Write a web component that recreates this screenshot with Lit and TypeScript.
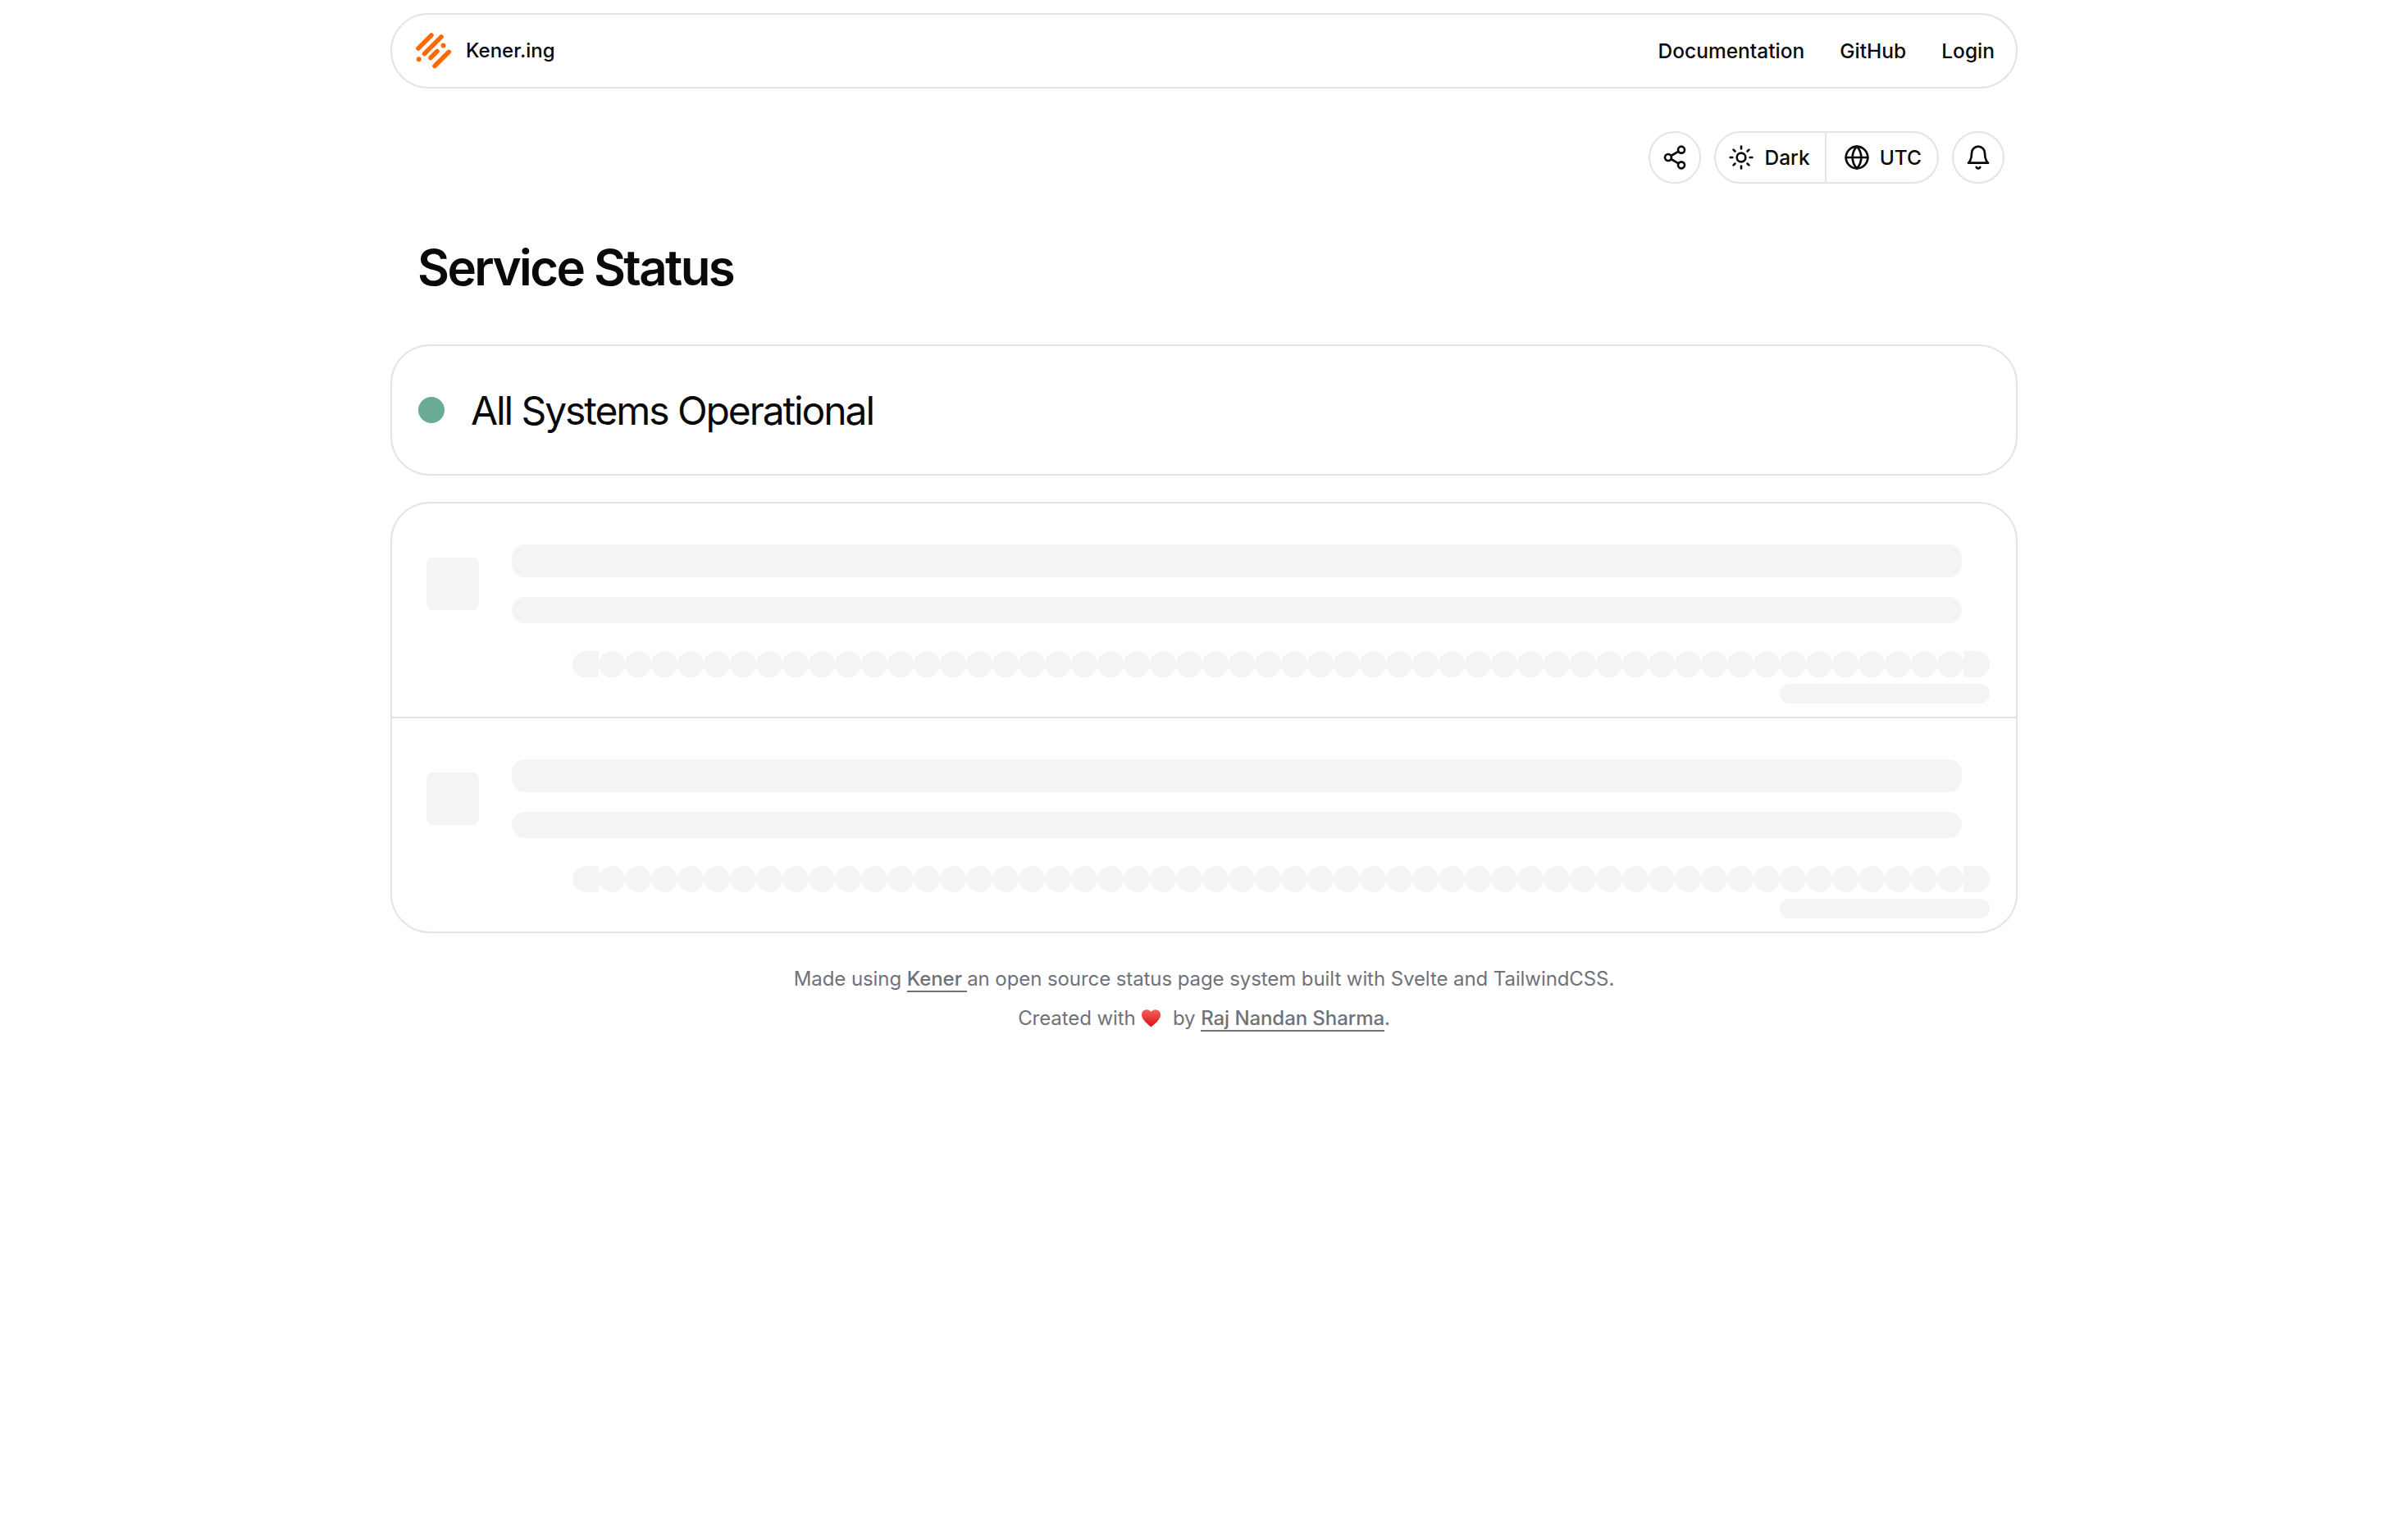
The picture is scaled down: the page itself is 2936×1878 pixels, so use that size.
import { LitElement, html, css, svg } from 'lit';
import { customElement } from 'lit/decorators.js';

const icon = (body: unknown) => html`<svg class="ico" viewBox="0 0 24 24" fill="none" stroke="currentColor" stroke-width="2" stroke-linecap="round" stroke-linejoin="round">${body}</svg>`;

const share = svg`<circle cx="18" cy="5" r="3"/><circle cx="6" cy="12" r="3"/><circle cx="18" cy="19" r="3"/><path d="m8.59 13.51 6.83 3.98"/><path d="m15.41 6.51-6.82 3.98"/>`;
const sun = svg`<circle cx="12" cy="12" r="4"/><path d="M12 2v2"/><path d="M12 20v2"/><path d="m4.93 4.93 1.41 1.41"/><path d="m17.66 17.66 1.41 1.41"/><path d="M2 12h2"/><path d="M20 12h2"/><path d="m6.34 17.66-1.41 1.41"/><path d="m19.07 4.93-1.41 1.41"/>`;
const globe = svg`<circle cx="12" cy="12" r="10"/><path d="M12 2a14.5 14.5 0 0 0 0 20 14.5 14.5 0 0 0 0-20"/><path d="M2 12h20"/>`;
const bell = svg`<path d="M6 8a6 6 0 0 1 12 0c0 7 3 9 3 9H3s3-2 3-9"/><path d="M10.3 21a1.94 1.94 0 0 0 3.4 0"/>`;

const DOTS = Array.from({ length: 54 });

@customElement('app-root')
export class AppRoot extends LitElement {
  static styles = css`
    :host {
      display: block;
      min-height: 1878px;
      background: #fff;
      color: #09090b;
      font-family: Inter, "Liberation Sans", sans-serif;
    }
    .page {
      width: 1984px;
      margin: 0 auto;
      padding-top: 16px;
      box-sizing: border-box;
    }
    .nav {
      height: 92px;
      box-sizing: border-box;
      border: 2px solid #e4e4e7;
      border-radius: 46px;
      display: flex;
      align-items: center;
      justify-content: space-between;
      padding: 0 26px 1px 29px;
      font-size: 24.5px;
      font-weight: 500;
    }
    .brand {
      display: flex;
      align-items: center;
      gap: 17px;
      font-size: 24px;
    }
    .logo {
      width: 44px;
      height: 44px;
      display: block;
    }
    .links {
      display: flex;
      gap: 43px;
    }
    .actions {
      display: flex;
      justify-content: flex-end;
      gap: 16px;
      margin-top: 52px;
      padding-right: 16px;
      font-size: 24.5px;
      font-weight: 500;
    }
    .round {
      width: 64px;
      height: 64px;
      box-sizing: border-box;
      border: 2px solid #e4e4e7;
      border-radius: 50%;
      display: flex;
      align-items: center;
      justify-content: center;
    }
    .ico {
      width: 32px;
      height: 32px;
      display: block;
      flex: none;
    }
    .group {
      height: 64px;
      box-sizing: border-box;
      border: 2px solid #e4e4e7;
      border-radius: 32px;
      display: flex;
    }
    .seg {
      display: flex;
      align-items: center;
      gap: 12px;
      padding: 0 18px 0 15px;
    }
    .seg + .seg {
      border-left: 2px solid #e4e4e7;
      padding: 0 19px 0 21px;
    }
    h1 {
      margin: 66px 0 0;
      padding-left: 33px;
      font-size: 60px;
      line-height: 72px;
      font-weight: 560;
      letter-spacing: -2.6px;
    }
    .status {
      height: 160px;
      box-sizing: border-box;
      margin-top: 58px;
      border: 2px solid #e4e4e7;
      border-radius: 48px;
      display: flex;
      align-items: center;
      gap: 32px;
      padding-left: 32px;
      font-size: 48px;
      letter-spacing: -2.1px;
    }
    .dot {
      width: 32px;
      height: 32px;
      border-radius: 50%;
      background: #6aab95;
    }
    .card {
      margin-top: 32px;
      border: 2px solid #e4e4e7;
      border-radius: 48px;
    }
    .row {
      padding-top: 50px;
      height: 210px;
    }
    .row + .row {
      border-top: 2px solid #e4e4e7;
    }
    .head {
      display: flex;
      align-items: center;
      gap: 40px;
      padding-left: 42px;
    }
    .square {
      width: 64px;
      height: 64px;
      border-radius: 8px;
      background: #f4f4f5;
    }
    .bars {
      width: 1768px;
      display: flex;
      flex-direction: column;
      gap: 24px;
    }
    .bar-a {
      height: 40px;
      border-radius: 16px;
      background: #f4f4f5;
    }
    .bar-b {
      height: 32px;
      border-radius: 16px;
      background: #f4f4f5;
    }
    .dots {
      display: flex;
      justify-content: flex-end;
      margin-top: 34px;
      padding-right: 32px;
    }
    .dots span {
      width: 32px;
      height: 32px;
      border-radius: 50%;
      background: #f4f4f5;
    }
    .dots span:first-child {
      border-radius: 16px 0 0 16px;
    }
    .dots span:last-child {
      border-radius: 0 16px 16px 0;
    }
    .range {
      display: flex;
      justify-content: flex-end;
      margin-top: 8px;
      padding-right: 32px;
    }
    .range span {
      width: 256px;
      height: 24px;
      border-radius: 12px;
      background: #f4f4f5;
    }
    .footer {
      margin-top: 32px;
      text-align: center;
      font-size: 24px;
      line-height: 48px;
      letter-spacing: -0.08px;
      color: #71717a;
    }
    .footer a {
      color: #71717a;
      font-weight: 500;
      text-decoration: none;
      border-bottom: 2px solid #71717a;
    }
    .heart {
      width: 25px;
      height: 25px;
      vertical-align: -4px;
      margin: 0 7px 0 0;
    }
  `;

  private skeleton() {
    return html`
      <div class="row">
        <div class="head">
          <div class="square"></div>
          <div class="bars"><div class="bar-a"></div><div class="bar-b"></div></div>
        </div>
        <div class="dots">${DOTS.map(() => html`<span></span>`)}</div>
        <div class="range"><span></span></div>
      </div>
    `;
  }

  render() {
    return html`
      <div class="page">
        <nav class="nav">
          <div class="brand">
            <svg class="logo" viewBox="0 0 44 44" fill="none" stroke="#ff6a00" stroke-width="5.5" stroke-linecap="round">
              <path d="M3 19 19 3"/>
              <path d="M10.5 25.5 31 5"/>
              <path d="M18 30.5 26 22.5"/>
              <path d="M23 40.5 40.3 23.3"/>
              <circle cx="3.7" cy="32.3" r="3" fill="#ff6a00" stroke="none"/>
              <circle cx="33.5" cy="15.5" r="3" fill="#ff6a00" stroke="none"/>
            </svg>
            <span>Kener.ing</span>
          </div>
          <div class="links">
            <span>Documentation</span>
            <span>GitHub</span>
            <span>Login</span>
          </div>
        </nav>
        <div class="actions">
          <div class="round">${icon(share)}</div>
          <div class="group">
            <div class="seg">${icon(sun)}<span>Dark</span></div>
            <div class="seg">${icon(globe)}<span>UTC</span></div>
          </div>
          <div class="round">${icon(bell)}</div>
        </div>
        <h1>Service Status</h1>
        <div class="status"><div class="dot"></div><span>All Systems Operational</span></div>
        <div class="card">${this.skeleton()}${this.skeleton()}</div>
        <footer class="footer">
          <div>Made using <a>Kener </a> an open source status page system built with Svelte and TailwindCSS.</div>
          <div>Created with
            <svg class="heart" viewBox="0 0 24 24"><defs><linearGradient id="h" x1="0" y1="0" x2="0" y2="1"><stop offset="0" stop-color="#f4605a"/><stop offset="1" stop-color="#d9120f"/></linearGradient></defs><path fill="url(#h)" d="M12 22.5C5 17 1 13 1 8a6 6 0 0 1 11-3.2A6 6 0 0 1 23 8c0 5-4 9-11 14.5z"/></svg>
            by <a>Raj Nandan Sharma</a>.</div>
        </footer>
      </div>
    `;
  }
}
